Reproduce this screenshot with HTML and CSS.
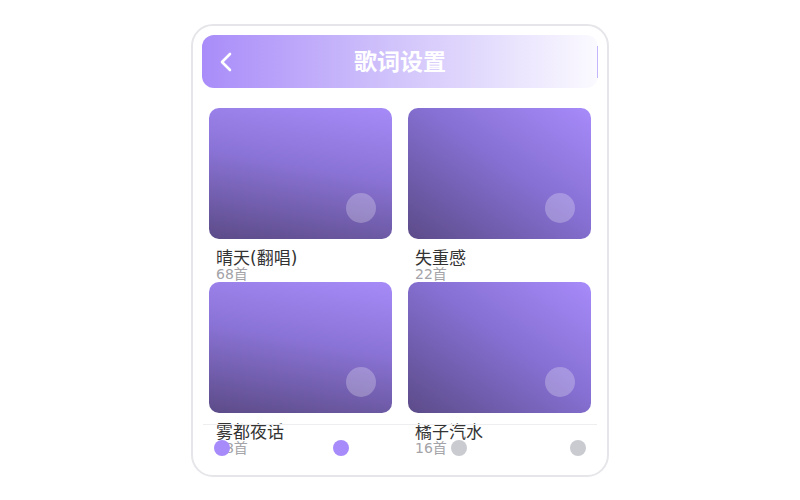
FILE: index.html
```html
<!DOCTYPE html>
<html lang="zh-CN">

<head>
    <meta charset="UTF-8">
    <meta name="viewport" content="width=device-width, initial-scale=1.0">
    <title>歌词设置</title>
    <link rel="stylesheet" href="styles.css">
</head>

<body>
    <div class="phone">
        <!-- 顶部标题栏 -->
        <div class="header">
            <span class="back">
                <svg width="14" height="22" viewBox="0 0 14 22">
                    <path d="M11 3 L3 11 L11 19" fill="none" stroke="#fff" stroke-width="2.6" stroke-linecap="round" stroke-linejoin="round"/>
                </svg>
            </span>
            <h1 class="title">歌词设置</h1>
            <span class="edge"><i></i></span>
        </div>

        <!-- 歌单列表 -->
        <div class="album-grid">
            <div class="album">
                <div class="cover cover-a"><span class="play"></span></div>
                <div class="name">晴天(翻唱)</div>
                <div class="count">68首</div>
            </div>
            <div class="album">
                <div class="cover cover-b"><span class="play"></span></div>
                <div class="name">失重感</div>
                <div class="count">22首</div>
            </div>
            <div class="album">
                <div class="cover cover-a"><span class="play"></span></div>
                <div class="name">雾都夜话</div>
                <div class="count">38首</div>
            </div>
            <div class="album">
                <div class="cover cover-b"><span class="play"></span></div>
                <div class="name">橘子汽水</div>
                <div class="count">16首</div>
            </div>
        </div>

        <!-- 底部导航 -->
        <div class="tab-bar">
            <span class="dot active"></span>
            <span class="dot active"></span>
            <span class="dot"></span>
            <span class="dot"></span>
        </div>
    </div>
</body>

</html>
```

FILE: styles.css
```css
body {
    font-family: "DejaVu Sans", "Noto Sans CJK SC", sans-serif;
    display: flex;
    align-items: center;
    justify-content: center;
    height: 100vh;
    margin: 0;
    background-color: #fff;
}

.phone {
    position: relative;
    box-sizing: border-box;
    width: 418px;
    height: 453px;
    margin-top: 1px;
    padding: 9px;
    border: 2px solid #e6e6ea;
    border-radius: 22px;
    background-color: #fff;
    overflow: hidden;
}

.header {
    display: grid;
    grid-template-columns: 1fr auto 1fr;
    align-items: center;
    height: 53px;
    border-radius: 12px;
    background: linear-gradient(to right, #a98cf9, #d2c5fb 50%, #fbfaff);
}

.back {
    display: flex;
    align-items: center;
    padding-left: 17px;
}

.title {
    margin: 0;
    padding-bottom: 4px;
    text-align: center;
    color: #fff;
    font-family: "Noto Sans CJK SC", sans-serif;
    font-size: 23px;
    font-weight: 700;
}

.edge {
    display: flex;
    justify-content: flex-end;
}

.edge i {
    width: 1px;
    height: 32px;
    background-color: #c4b5fd;
}

.album-grid {
    display: grid;
    grid-template-columns: 1fr 1fr;
    column-gap: 16px;
    margin-top: 20px;
    padding: 0 7px;
}

.cover {
    position: relative;
    height: 131px;
    border-radius: 10px;
}

.cover-a {
    background: linear-gradient(190deg, #a68bf8, #8a73d6 45%, #5c4b88);
}

.cover-b {
    background: linear-gradient(215deg, #a78bfa, #8670d3 45%, #5c4b89);
}

.play {
    position: absolute;
    right: 16px;
    bottom: 16px;
    width: 30px;
    height: 30px;
    border-radius: 50%;
    background-color: rgba(255, 255, 255, 0.25);
}

.name {
    margin-top: 10px;
    padding-left: 7px;
    font-size: 17px;
    line-height: 18px;
    color: #333;
}

.count {
    padding-left: 7px;
    font-size: 14px;
    line-height: 15px;
    color: #a3a3a8;
}

.tab-bar {
    position: absolute;
    left: 10px;
    right: 10px;
    top: 398px;
    display: flex;
    justify-content: space-between;
    padding: 15px 11px 0;
    border-top: 1px solid #eeeef0;
}

.dot {
    width: 16px;
    height: 16px;
    border-radius: 50%;
    background-color: #c9cbd0;
}

.dot.active {
    background-color: #a78bfa;
}
```
